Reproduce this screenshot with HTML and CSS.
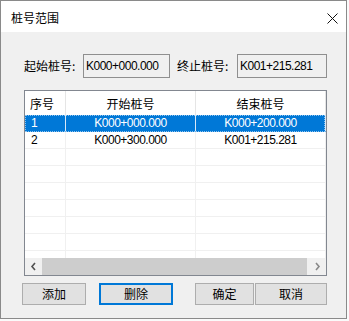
FILE: index.html
```html
<!DOCTYPE html>
<html lang="zh-CN">
<head>
<meta charset="utf-8">
<title>桩号范围</title>
<link rel="stylesheet" href="styles.css">
</head>
<body>
<div class="window">
  <div class="titlebar">
    <span class="title">桩号范围</span>
    <svg class="close" width="11" height="11" viewBox="0 0 11 11"><path d="M0.5 0.5 L10.5 10.5 M10.5 0.5 L0.5 10.5" stroke="#111" stroke-width="1" fill="none"/></svg>
  </div>
  <div class="content">
    <div class="fields">
      <span class="label label-start">起始桩号:</span>
      <div class="textbox box-start num">K000+000.000</div>
      <span class="label label-end">终止桩号:</span>
      <div class="textbox box-end num">K001+215.281</div>
    </div>
    <div class="list">
      <div class="rows">
        <div class="row header">
          <div class="cell first">序号</div>
          <div class="cell center">开始桩号</div>
          <div class="cell center">结束桩号</div>
        </div>
        <div class="row selected">
          <div class="cell first num">1</div>
          <div class="cell center num">K000+000.000</div>
          <div class="cell center num">K000+200.000</div>
        </div>
        <div class="row">
          <div class="cell first num">2</div>
          <div class="cell center num">K000+300.000</div>
          <div class="cell center num">K001+215.281</div>
        </div>
        <div class="row"><div class="cell"></div><div class="cell"></div><div class="cell"></div></div>
        <div class="row"><div class="cell"></div><div class="cell"></div><div class="cell"></div></div>
        <div class="row"><div class="cell"></div><div class="cell"></div><div class="cell"></div></div>
        <div class="row"><div class="cell"></div><div class="cell"></div><div class="cell"></div></div>
        <div class="row"><div class="cell"></div><div class="cell"></div><div class="cell"></div></div>
        <div class="row"><div class="cell"></div><div class="cell"></div><div class="cell"></div></div>
        <div class="row"><div class="cell"></div><div class="cell"></div><div class="cell"></div></div>
      </div>
      <div class="hscroll">
        <div class="arrow">
          <svg width="7" height="9" viewBox="0 0 7 9"><path d="M5 1 L2 4.5 L5 8" stroke="#505050" stroke-width="1.6" fill="none"/></svg>
        </div>
        <div class="track"><div class="thumb"></div></div>
        <div class="arrow">
          <svg width="7" height="9" viewBox="0 0 7 9"><path d="M2 1 L5 4.5 L2 8" stroke="#888" stroke-width="1.6" fill="none"/></svg>
        </div>
      </div>
    </div>
    <div class="buttons">
      <button class="btn btn-add">添加</button>
      <button class="btn btn-del default">删除</button>
      <button class="btn btn-ok">确定</button>
      <button class="btn btn-cancel">取消</button>
    </div>
  </div>
</div>
</body>
</html>
```
FILE: styles.css
```css
* { box-sizing: border-box; }

body {
  margin: 0;
  background: #fafafa;
  font-family: "Noto Sans CJK SC", "Microsoft YaHei", sans-serif;
  font-size: 12px;
  color: #000;
}

.window {
  width: 347px;
  height: 319px;
  border: 1px solid #8a8a8a;
  background: #f0f0f0;
  display: flex;
  flex-direction: column;
}

.titlebar {
  height: 31px;
  background: #fff;
  display: flex;
  align-items: center;
  justify-content: space-between;
  padding: 0 8px 0 10px;
  flex: none;
}

.title {
  font-size: 12px;
  line-height: 14px;
  margin-top: 2px;
}

.close {
  display: block;
  margin-top: 3px;
}

.content {
  flex: 1;
  display: flex;
  flex-direction: column;
}

.num {
  font-family: "Liberation Sans Narrow", "Liberation Sans", Arial, sans-serif;
  font-size: 12px;
  letter-spacing: -0.5px;
}

.fields {
  display: flex;
  align-items: center;
  height: 24px;
  margin: 22px 0 0 23px;
}

.label {
  font-size: 12px;
  line-height: 14px;
}

.label-start { width: 59px; }
.label-end { width: 60px; margin-left: 7px; }

.textbox {
  height: 24px;
  border: 1px solid #8f8f8f;
  background: #f0f0f0;
  padding: 0 2px;
  display: flex;
  align-items: center;
}

.box-start { width: 87px; }
.box-end { width: 90px; }

.list {
  width: 303px;
  height: 186px;
  margin: 12px 0 0 23px;
  border: 1px solid #828790;
  background: #fff;
  display: flex;
  flex-direction: column;
}

.rows {
  flex: 1;
  overflow: hidden;
}

.row {
  display: grid;
  grid-template-columns: 41px 130px 130px;
  height: 17px;
}

.cell {
  border-right: 1px solid #f0f0f0;
  border-bottom: 1px solid #f0f0f0;
  display: flex;
  align-items: center;
  white-space: nowrap;
  overflow: hidden;
}

.cell.first { padding-left: 6px; }
.cell.center { justify-content: center; }

.row.header { height: 24px; }
.row.header .cell {
  border-bottom: none;
  border-right-color: #e5e5e5;
  font-size: 12px;
  padding-top: 1px;
}
.row.header .cell.first { padding-left: 5px; }

.row.selected {
  background: #0078d7;
  color: #fff;
  outline: 1px dotted #8fc3ee;
  outline-offset: -1px;
  width: 300px;
}
.row.selected .cell {
  border-bottom-color: #0078d7;
  border-right-color: #d8e8f7;
}

.hscroll {
  height: 17px;
  display: flex;
  background: #f0f0f0;
  flex: none;
}

.arrow {
  width: 17px;
  display: flex;
  align-items: center;
  justify-content: center;
}

.arrow svg { display: block; }

.track {
  flex: 1;
  display: flex;
  padding-right: 2px;
}

.thumb {
  flex: 1;
  background: #cdcdcd;
}

.buttons {
  display: flex;
  margin: 7px 0 0 21px;
  height: 22px;
}

.btn {
  height: 22px;
  border: 1px solid #adadad;
  background: #e1e1e1;
  font-family: "Noto Sans CJK SC", "Microsoft YaHei", sans-serif;
  font-size: 12px;
  color: #000;
  padding: 0;
  margin: 0;
  line-height: 14px;
}

.btn.default { border: 2px solid #0078d7; }

.btn-add { width: 64px; }
.btn-del { width: 74px; margin-left: 13px; }
.btn-ok { width: 59px; margin-left: 22px; }
.btn-cancel { width: 72px; margin-left: 1px; }
```
